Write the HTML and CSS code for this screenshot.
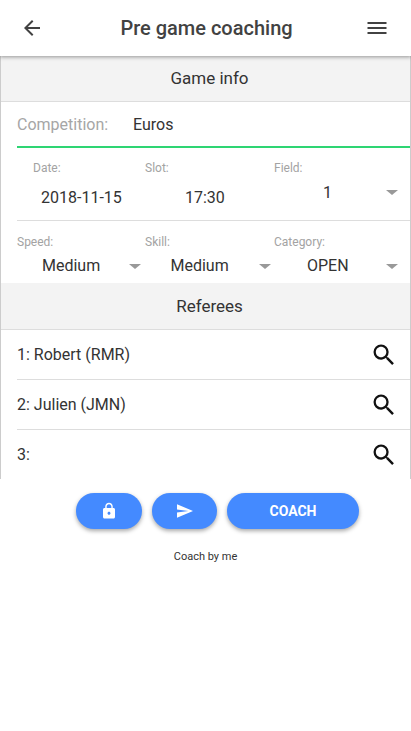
FILE: index.html
```html
<!DOCTYPE html>
<html lang="en">
<head>
<meta charset="utf-8">
<title>Pre game coaching</title>
<link rel="stylesheet" href="styles.css">
</head>
<body>
<header class="topbar">
  <button class="iconbtn"><svg width="24" height="24" viewBox="0 0 24 24"><path d="M20 11H7.83l5.59-5.59L12 4l-8 8 8 8 1.41-1.41L7.83 13H20v-2z" fill="#424242"/></svg></button>
  <h1 class="title">Pre game coaching</h1>
  <button class="iconbtn"><svg width="24" height="24" viewBox="0 0 24 24"><path d="M2.500 18h19v-2h-19v2zm0-5h19v-2h-19v2zm0-7v2h19V6h-19z" fill="#424242"/></svg></button>
</header>
<main class="panel">
  <div class="section-head first">Game info</div>
  <div class="comp-row">
    <span class="comp-label">Competition:</span>
    <span class="comp-value">Euros</span>
  </div>
  <div class="row row-date">
    <div class="cell c1 indent">
      <span class="small">Date:</span>
      <span class="val date-val">2018-11-15</span>
    </div>
    <div class="cell c2">
      <span class="small">Slot:</span>
      <span class="val slot-val">17:30</span>
    </div>
    <div class="cell c3">
      <span class="small">Field:</span>
      <div class="select field-sel"><span class="sel-text">1</span><i class="caret"></i></div>
    </div>
  </div>
  <div class="row row-speed">
    <div class="cell c1">
      <span class="small">Speed:</span>
      <div class="select"><span class="sel-text">Medium</span><i class="caret"></i></div>
    </div>
    <div class="cell c2">
      <span class="small">Skill:</span>
      <div class="select"><span class="sel-text">Medium</span><i class="caret"></i></div>
    </div>
    <div class="cell c3">
      <span class="small">Category:</span>
      <div class="select"><span class="sel-text">OPEN</span><i class="caret"></i></div>
    </div>
  </div>
  <div class="section-head">Referees</div>
  <ul class="refs">
    <li class="ref"><span>1: Robert (RMR)</span><svg class="search" width="28" height="28" viewBox="0 0 24 24"><path d="M15.5 14h-.79l-.28-.27A6.47 6.47 0 0 0 16 9.5 6.500 6.500 0 1 0 9.500 16c1.610 0 3.090-.59 4.230-1.570l.27.28v.79l5 4.990L20.490 19l-4.990-5zm-6 0C7.010 14 5 11.990 5 9.500S7.010 5 9.500 5 14 7.010 14 9.500 11.990 14 9.500 14z"/></svg></li>
    <li class="ref"><span>2: Julien (JMN)</span><svg class="search" width="28" height="28" viewBox="0 0 24 24"><path d="M15.5 14h-.79l-.28-.27A6.47 6.47 0 0 0 16 9.5 6.500 6.500 0 1 0 9.500 16c1.610 0 3.090-.59 4.230-1.570l.27.28v.79l5 4.990L20.490 19l-4.990-5zm-6 0C7.010 14 5 11.990 5 9.500S7.010 5 9.500 5 14 7.010 14 9.500 11.990 14 9.500 14z"/></svg></li>
    <li class="ref"><span>3:</span><svg class="search" width="28" height="28" viewBox="0 0 24 24"><path d="M15.5 14h-.79l-.28-.27A6.47 6.47 0 0 0 16 9.5 6.500 6.500 0 1 0 9.500 16c1.610 0 3.090-.59 4.230-1.570l.27.28v.79l5 4.990L20.490 19l-4.990-5zm-6 0C7.010 14 5 11.990 5 9.500S7.010 5 9.500 5 14 7.010 14 9.500 11.990 14 9.500 14z"/></svg></li>
  </ul>
</main>
<div class="actions">
  <button class="pill pill-lock"><svg width="18" height="18" viewBox="0 0 24 24"><path d="M18 8h-1V6c0-2.76-2.24-5-5-5S7 3.24 7 6v2H6c-1.100 0-2 .9-2 2v10c0 1.100.9 2 2 2h12c1.100 0 2-.9 2-2V10c0-1.100-.9-2-2-2zm-6 9c-1.100 0-2-.9-2-2s.9-2 2-2 2 .9 2 2-.9 2-2 2zm3.100-9H8.900V6c0-1.710 1.390-3.100 3.100-3.100s3.100 1.390 3.100 3.100v2z" fill="#fff"/></svg></button>
  <button class="pill pill-send"><svg width="16" height="14" viewBox="2 3 21 18"><path d="M2.010 21 23 12 2.010 3 2 10l15 2-15 2z" fill="#fff"/></svg></button>
  <button class="pill pill-coach">COACH</button>
</div>
<p class="note">Coach by me</p>
</body>
</html>
```

FILE: styles.css
```css
* { box-sizing: border-box; }
html, body { margin: 0; padding: 0; }
body {
  width: 411px;
  height: 731px;
  overflow: hidden;
  background: #fff;
  font-family: Roboto, sans-serif;
  color: #222;
}
.topbar {
  height: 56px;
  display: flex;
  align-items: center;
  justify-content: space-between;
  padding: 0 22px 0 20px;
  background: #fff;
  box-shadow: 0 1px 4px rgba(0,0,0,.4);
  position: relative;
}
.iconbtn {
  width: 24px;
  height: 24px;
  padding: 0;
  border: 0;
  background: none;
  display: flex;
}
.title {
  margin: 0 0 0 4px;
  font-size: 20px;
  font-weight: 500;
  color: #424242;
}
.panel {
  height: 423px;
  border-left: 1px solid #ccc;
  border-right: 1px solid #ccc;
  overflow: hidden;
}
.section-head {
  height: 47px;
  display: flex;
  align-items: center;
  justify-content: center;
  padding-left: 8px;
  background: #f3f3f3;
  border-bottom: 1px solid #ddd;
  font-size: 17px;
  color: #333;
}
.section-head.first { height: 46px; padding-bottom: 2px; }
.comp-row {
  margin-left: 16px;
  height: 46px;
  display: flex;
  align-items: center;
  border-bottom: 2px solid #2ed573;
  font-size: 16px;
}
.comp-label { width: 116px; font-size: 16px; color: #a6a6a6; }
.comp-value { color: #333; }
.row {
  margin-left: 16px;
  display: flex;
}
.row-date {
  height: 73px;
  border-bottom: 1px solid #ddd;
  padding-top: 13px;
}
.row-speed { height: 62px; padding-top: 14px; }
.cell { display: flex; flex-direction: column; }
.c1 { width: 128px; }
.c2 { width: 129px; }
.c3 { width: 121px; }
.indent { padding-left: 16px; }
.small { font-size: 12px; line-height: 14px; color: #a3a3a3; }
.val { font-size: 16px; line-height: 20px; color: #333; }
.date-val { margin: 13px 0 0 8px; }
.slot-val { margin: 13px 0 0 40px; }
.select {
  display: flex;
  align-items: center;
  height: 20px;
  margin-top: 7px;
  position: relative;
}
.sel-text {
  flex: 1;
  font-size: 16px;
  line-height: 20px;
  color: #333;
  padding-left: 25px;
}
.c2 .sel-text { padding-left: 25.5px; }
.c3 .sel-text { padding-left: 33px; }
.field-sel { margin-top: 8px; }
.field-sel .sel-text { padding-left: 49px; }
.caret {
  width: 0;
  height: 0;
  border-left: 6px solid transparent;
  border-right: 6px solid transparent;
  border-top: 5px solid #999;
}
.c1 .caret { margin-right: 4px; }
.c2 .caret { margin-right: 3px; }
.c3 .caret { margin-right: -3px; }
.field-sel .caret { margin-top: -1px; }
.refs { list-style: none; margin: 0; padding: 0; }
.ref {
  margin-left: 16px;
  height: 50px;
  padding-right: 12px;
  display: flex;
  align-items: center;
  justify-content: space-between;
  border-bottom: 1px solid #ddd;
  font-size: 16px;
  color: #333;
}
.search { display: block; fill: #111; }
.actions {
  display: flex;
  justify-content: center;
  gap: 10px;
  margin-top: 14px;
  padding-left: 24px;
}
.pill {
  height: 36px;
  border: 0;
  border-radius: 18px;
  background: #448aff;
  color: #fff;
  font-family: Roboto, sans-serif;
  font-weight: 700;
  font-size: 14px;
  display: flex;
  align-items: center;
  justify-content: center;
  padding: 0;
  box-shadow: 0 2px 4px rgba(0,0,0,.35);
}
.pill-lock { width: 66px; }
.pill-send { width: 65px; }
.pill-coach { width: 132px; }
.note {
  margin: 21px 0 0;
  text-align: center;
  font-size: 11px;
  line-height: 13px;
  color: #333;
}
```
